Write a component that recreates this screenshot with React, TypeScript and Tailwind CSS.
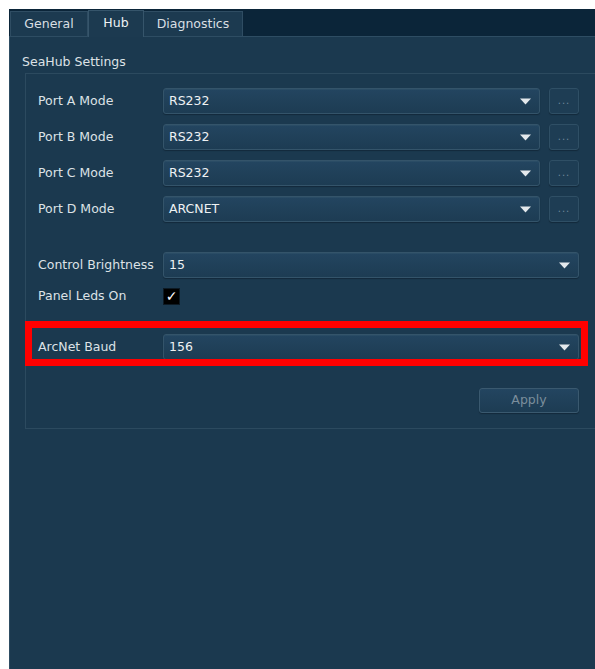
import { ReactNode } from "react";

const font = { fontFamily: '"DejaVu Sans", Verdana, sans-serif' };

const Arrow = () => (
  <svg width="11" height="7" viewBox="0 0 11 7" className="shrink-0">
    <path d="M0 0.5 H11 L5.5 6.5 Z" fill="#e3e8ec" />
  </svg>
);

const Combo = ({ value, width }: { value: string; width: string }) => (
  <div
    className={`${width} h-[26px] flex items-center justify-between pl-[5px] pr-[8px] rounded-[3px] border border-[#34546a] bg-gradient-to-b from-[#234560] to-[#1d3c53] shadow-[inset_0_1px_0_#2a4c65,0_1px_1px_#132a3b] text-[12.5px] text-[#eef1f3]`}
  >
    <span>{value}</span>
    <Arrow />
  </div>
);

const DotsButton = () => (
  <div className="w-[30px] h-[26px] flex items-center justify-center rounded-[3px] border border-[#2f4f65] bg-[#1e3d54] shadow-[0_1px_1px_#132a3b] text-[10px] leading-none tracking-[1px] text-[#6f8799]">
    ...
  </div>
);

const Row = ({ label, children }: { label: string; children: ReactNode }) => (
  <div className="flex items-center">
    <div className="w-[125px] text-[12.5px] text-[#dde2e6]">{label}</div>
    {children}
  </div>
);

const ports = ["A", "B", "C", "D"];
const portModes = ["RS232", "RS232", "RS232", "ARCNET"];

export default function App() {
  return (
    <div style={font} className="w-[595px] h-[669px] bg-white pt-[9px] pl-[9px] overflow-hidden">
      <div className="flex flex-col h-full">
        {/* tab strip */}
        <div className="h-[27px] bg-[#0b2539] flex items-end shrink-0">
          <div className="h-[25px] w-[78px] ml-px flex items-center justify-center bg-[#1c3a50] border border-[#2f4d63] border-b-0 text-[12.5px] text-[#d9dfe3]">
            General
          </div>
          <div className="h-[27px] w-[56px] flex items-start pt-[3px] justify-center bg-[#1c3a50] border border-[#36556b] border-b-0 text-[12.5px] text-[#eef2f4] relative z-10 -mb-px">
            Hub
          </div>
          <div className="h-[25px] w-[99px] flex items-center justify-center bg-[#1c3a50] border border-[#2f4d63] border-b-0 border-l-0 text-[12.5px] text-[#d9dfe3]">
            Diagnostics
          </div>
        </div>

        <div className="flex-1 bg-[#1b394f] border-t border-l border-[#2e4d63] pl-[15px] pt-[16px]">
          <div className="text-[12.5px] text-[#dde2e6] -ml-[3px] h-[20px]">SeaHub Settings</div>

          {/* group box */}
          <div className="relative h-[356px] border-t border-l border-b border-[#2c4a5f] pl-[12px] pt-[14px] pr-[13px]">
            <div className="flex flex-col gap-[10px]">
              {ports.map((p, i) => (
                <Row key={p} label={`Port ${p} Mode`}>
                  <Combo value={portModes[i]} width="w-[377px]" />
                  <div className="ml-[9px]">
                    <DotsButton />
                  </div>
                </Row>
              ))}
            </div>

            <div className="mt-[30px]">
              <Row label="Control Brightness">
                <Combo value="15" width="w-[416px]" />
              </Row>
            </div>

            <div className="mt-[9px] h-[18px]">
              <Row label="Panel Leds On">
                <div className="w-[17px] h-[17px] bg-black border border-[#0d1a24] flex items-center justify-center text-white text-[14px] font-bold leading-none">
                  ✓
                </div>
              </Row>
            </div>

            <div className="mt-[29px]">
              <Row label="ArcNet Baud">
                <Combo value="156" width="w-[416px]" />
              </Row>
            </div>

            <div className="mt-[28px]">
              <Row label="">
                <div className="w-[416px] flex justify-end">
                  <div className="w-[100px] h-[25px] flex items-center justify-center rounded-[3px] border border-[#3a596f] bg-gradient-to-b from-[#234560] to-[#1d3c53] shadow-[0_1px_1px_#132a3b] text-[12.5px] text-[#7b8e9c]">
                    Apply
                  </div>
                </div>
              </Row>
            </div>

            {/* highlight frame */}
            <div className="absolute left-[-1px] top-[247px] w-[563px] h-[45px] border-[7px] border-[#ff0000] pointer-events-none" />
          </div>
        </div>
      </div>
    </div>
  );
}
